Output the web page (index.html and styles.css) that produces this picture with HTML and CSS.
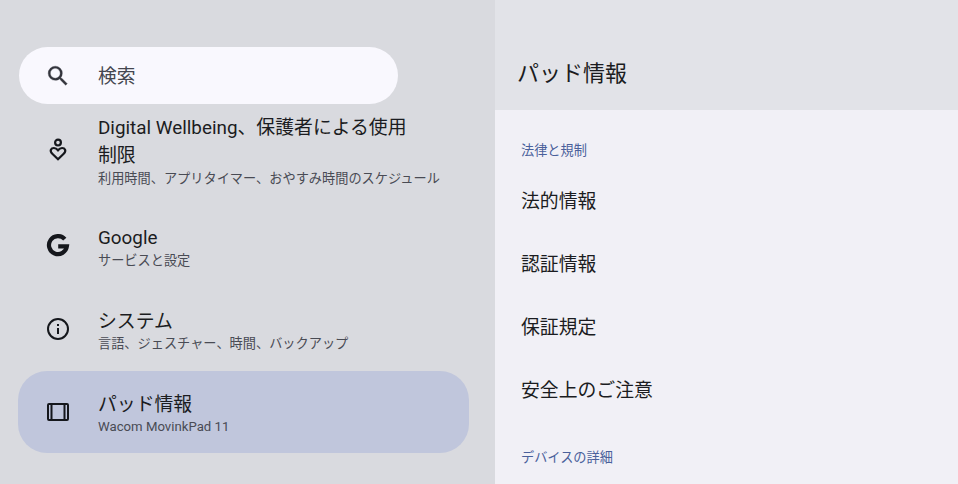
FILE: index.html
```
<!DOCTYPE html>
<html lang="ja">
<head>
    <meta charset="UTF-8">
    <meta name="viewport" content="width=device-width, initial-scale=1.0">
    <title>パッド情報</title>
    <link rel="stylesheet" href="styles.css">
</head>
<body>
    <div class="settings">
        <nav class="sidebar">
            <div class="search">
                <svg class="icon" viewBox="1 1 22 22"><path fill="#33343c" stroke="#33343c" stroke-width=".3" d="M15.500 14h-.79l-.28-.27A6.470 6.470 0 0 0 16 9.500 6.500 6.500 0 1 0 9.500 16c1.610 0 3.090-.59 4.230-1.570l.27.28v.79l5 4.990L20.490 19l-4.990-5zm-6 0C7.010 14 5 11.990 5 9.500S7.010 5 9.500 5 14 7.010 14 9.500 11.990 14 9.500 14z"/></svg>
                <span class="search-text">検索</span>
            </div>

            <div class="menu">
                <div class="menu-item tall">
                    <svg class="icon" viewBox="0 0 24 24" fill="none" stroke="#15171c" stroke-width="2.200"><circle cx="12" cy="4.600" r="2.900"/><path d="M12 21.200 6.300 15.700C3.200 12.600 5.200 10 7.900 10c1.700 0 3 .9 4.100 2.300C13.100 10.900 14.400 10 16.100 10c2.700 0 4.700 2.600 1.600 5.700z"/></svg>
                    <div class="menu-text">
                        <div class="title">Digital Wellbeing、保護者による使用<br>制限</div>
                        <div class="summary">利用時間、アプリタイマー、おやすみ時間のスケジュール</div>
                    </div>
                </div>
                <div class="menu-item">
                    <svg class="icon" viewBox="0 0 24 24" fill="none" stroke="#15171c" stroke-width="4.200"><path d="M18.800 5.200A9 9 0 1 0 20.900 12.300H12.200"/></svg>
                    <div class="menu-text">
                        <div class="title">Google</div>
                        <div class="summary">サービスと設定</div>
                    </div>
                </div>
                <div class="menu-item">
                    <svg class="icon" viewBox="0 0 24 24" fill="none" stroke="#15171c" stroke-width="2"><circle cx="12" cy="12" r="10"/><path d="M12 11v6M12 7v2"/></svg>
                    <div class="menu-text">
                        <div class="title kana">システム</div>
                        <div class="summary">言語、ジェスチャー、時間、バックアップ</div>
                    </div>
                </div>
                <div class="menu-item selected">
                    <svg class="icon" viewBox="0 0 24 24" fill="none" stroke="#15171c" stroke-width="2"><rect x="2" y="4" width="20" height="16" rx="1"/><path d="M5.500 4v16M18.500 4v16"/></svg>
                    <div class="menu-text">
                        <div class="title kana">パッド情報</div>
                        <div class="summary">Wacom MovinkPad 11</div>
                    </div>
                </div>
            </div>
        </nav>

        <main class="detail">
            <header class="detail-header">
                <h1>パッド情報</h1>
            </header>
            <section class="group">
                <h2>法律と規制</h2>
                <div class="row">法的情報</div>
                <div class="row">認証情報</div>
                <div class="row">保証規定</div>
                <div class="row">安全上のご注意</div>
            </section>
            <section class="group">
                <h2>デバイスの詳細</h2>
            </section>
        </main>
    </div>
</body>
</html>
```
FILE: styles.css
```
*{margin:0;padding:0;box-sizing:border-box}
body{height:100vh;overflow:hidden;background:#d9dadf;color:#1b1c21;font-family:Roboto,"Noto Sans CJK JP",sans-serif}
.settings{display:flex;height:100vh}
.sidebar{width:495px;flex-shrink:0;padding:47px 26px 0 18px;background:#d9dadf}
.search{display:flex;align-items:center;width:379px;height:57px;margin-left:1px;padding-left:27px;border-radius:29px;background:#f9f8fe;color:#44464f}
.search .icon{margin-right:28px}
.search-text{padding-top:3px;font-size:18.800px;line-height:28px}
.icon{width:24px;height:24px;flex-shrink:0}
.menu-item{display:flex;align-items:center;height:83.500px;padding-left:28px;border-radius:29px}
.menu-item .icon{margin-right:28px}
.menu-item.tall{height:91px;margin-bottom:9px}
.menu-item.selected{height:82px;background:#c0c6dc}
.menu-text{padding-top:2px;white-space:nowrap}
.title{font-size:18.850px;line-height:28px}
.title.kana{height:28px;line-height:30px}
.summary{font-size:13.200px;line-height:18px;color:#494b54}
.detail{flex:1;background:#f1f0f6}
.detail-header{height:110px;padding:57px 0 0 22px;background:#e2e3e8}
h1{font-size:22px;line-height:34px;font-weight:400}
.group{padding:22px 0 0 26px}
.group + .group{padding-top:16px}
h2{height:39px;font-size:13.200px;line-height:38px;font-weight:400;color:#4a609b}
.row{height:63px;font-size:18.850px;line-height:63px}
```
